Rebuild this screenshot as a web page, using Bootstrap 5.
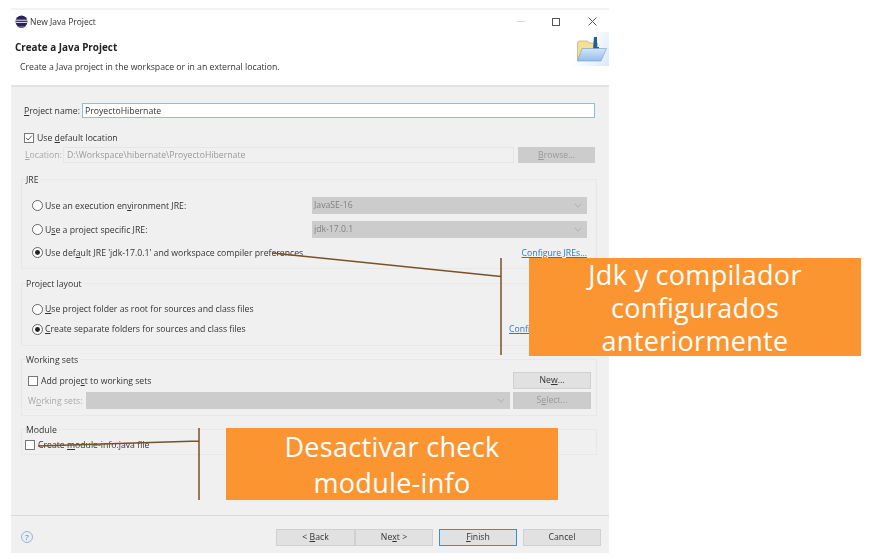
<!DOCTYPE html>
<html lang="en">
<head>
<meta charset="UTF-8">
<title>New Java Project</title>
<link href="https://cdn.jsdelivr.net/npm/bootstrap@5.3.0/dist/css/bootstrap.min.css" rel="stylesheet">
<style>
html, body { background: #fff; height: 100%; overflow: hidden; }
body { font-family: "Open Sans", "Liberation Sans", sans-serif; font-size: 8.7px; line-height: 12px; color: #333; position: relative; }
.dlg { width: 598px; margin: 8px 0 0 11px; height: 545px; background: #f0f0f0; filter: blur(.45px); }
.dlg-head { height: 77px; background: #fff; border-top: 2px solid #f3f3f3; }
.title-row { height: 23px; padding: 0 12px 0 4px; font-size: 8.5px; }
.title-icon { margin-right: 2px; }
.win-min { width: 8px; height: 1px; background: #d8d8d8; margin-right: 27px; }
.win-max { width: 8px; height: 8px; border: 1px solid #555; margin-right: 28px; }
.head-title { font-weight: 700; font-size: 9.9px; padding-left: 4px; margin-top: 8px; color: #222; }
.head-sub { padding-left: 9px; margin-top: 8px; }
.head-folder { width: 37px; height: 34px; background: linear-gradient(120deg, #fff 30%, #dce9f8); margin-top: -1px; }
.dlg-sep { height: 2px; background: #e2e2e2; }
.dlg-body { padding: 16px 12px 0 10px; height: 429px; border-bottom: 1px solid #d9d9d9; }
.field-row { height: 15px; margin-right: 2px; }
.name-label { width: 61px; padding-left: 3px; }
.name-input { flex: 1; min-width: 0; height: 15px; border: 1px solid #80c2ea; background: #fff; font-size: 8.7px; padding: 0 2px; color: #333; border-radius: 0; outline: 0; font-family: inherit; }
.use-default { height: 10px; margin: 15px 0 4px 3px; }
.form-check-input.tick { width: 10px; height: 10px; margin: 0 3px 0 0; border: 1px solid #777; border-radius: 0; background-color: #fff; flex: none; float: none; }
.form-check-input.tick:checked { background-color: #fff; border-color: #777; background-image: url("data:image/svg+xml,%3csvg xmlns='http://www.w3.org/2000/svg' viewBox='0 0 10 10'%3e%3cpath fill='none' stroke='%23333' d='M1.5 5l2.3 2.5L8.5 2'/%3e%3c/svg%3e"); }
.form-check-input.dot { width: 11px; height: 11px; margin: 0 2px 0 0; border: 1px solid #666; background-color: #fff; flex: none; float: none; }
.form-check-input.dot:checked { background-color: #fff; border-color: #666; background-image: url("data:image/svg+xml,%3csvg xmlns='http://www.w3.org/2000/svg' viewBox='0 0 11 11'%3e%3ccircle cx='5.5' cy='5.5' r='3' fill='%23222'/%3e%3c/svg%3e"); background-size: 100%; }
.loc-row { height: 16px; margin-right: 2px; }
.loc-label { width: 42px; padding-left: 4px; color: #a8a8a8; }
.loc-input { flex: 1; height: 16px; border: 1px solid #e6e6e6; color: #999; padding-left: 3px; line-height: 14px; }
.win-btn { width: 78px; height: 17px; background: #e1e1e1; border: 1px solid #d0d0d0; font-size: 8.7px; line-height: 15px; padding: 0; color: #333; border-radius: 0; font-family: inherit; text-align: center; }
.win-btn:disabled { background: #ccc; color: #999; border-color: #ccc; opacity: 1; }
.loc-btn { width: 77px; height: 16px; margin-left: 4px; line-height: 14px; }
.back-btn { width: 79px; }
.win-btn.main-btn { border: 1px solid #3b8fd0; margin: 0 6px; }
.win-select { height: 17px; min-height: 0; background-color: #ccc; border: 0; border-radius: 0; font-size: 8.7px; line-height: 17px; padding: 0 2px; color: #808080; background-image: url("data:image/svg+xml,%3csvg xmlns='http://www.w3.org/2000/svg' viewBox='0 0 10 6'%3e%3cpath fill='none' stroke='%23a8a8a8' d='M1 1l4 4 4-4'/%3e%3c/svg%3e"); background-size: 8px 5px; background-position: right 5px center; font-family: inherit; opacity: 1; }
.win-select:disabled { background-color: #ccc; color: #808080; }
.sel-jre { width: 275px; margin-right: 9px; }
.grp { border: 1px solid #e8e8e8; }
.grp-name { width: fit-content; margin: -6px 0 0 4px; padding-right: 2px; height: 12px; background: #f0f0f0; }
.grp-jre { height: 90px; margin-top: 16px; padding-left: 10px; }
.grp-jre .grp-name, .grp-layout .grp-name { margin-left: -6px; }
.jre-row { height: 17px; }
.jre-row.first { margin-top: 11px; }
.jre-row.second { margin-top: 7px; }
.jre-row.third { margin-top: 6px; }
.jre-link { margin-left: auto; margin-right: 9px; color: #1f7fc4; text-decoration: underline; }
.grp-layout { height: 63px; margin-top: 14px; padding-left: 10px; }
.layout-row { height: 20px; }
.layout-row.first { margin-top: 9px; }
.layout-link { margin-right: 10px; width: 77px; white-space: nowrap; }
.grp-sets { height: 57px; margin-top: 13px; padding: 0 5px 0 6px; }
.grp-sets .grp-name { margin-left: -2px; }
.sets-row { height: 17px; }
.sets-row.first { margin-top: 6px; }
.sets-row.second { margin-top: 3px; }
.sets-label { width: 58px; color: #a8a8a8; }
.sel-sets { flex: 1; width: auto; margin-right: 3px; }
.grp-module { height: 26px; margin-top: 13px; padding-left: 3px; }
.grp-module .grp-name { margin-left: 1px; }
.module-row { margin-top: 3px; }
.dlg-foot { height: 37px; padding: 13px 8px 0 10px; }
.help-mark { width: 12px; height: 12px; border: 1px solid #9fb4cc; border-radius: 50%; background: #e8eef6; color: #5a7aa0; font-size: 8px; line-height: 10px; text-align: center; margin-top: 2px; }
.overlay-lines { position: absolute; left: 0; top: 0; width: 873px; height: 559px; pointer-events: none; }
.callout { position: absolute; width: 332px; background: #fb9531; color: #fff; font-size: 27px; letter-spacing: .3px; text-align: center; font-family: "Open Sans", "Liberation Sans", sans-serif; }
.callout-jdk { left: 529px; top: 258px; height: 98px; line-height: 33px; }
.callout-mod { left: 226px; top: 428px; height: 72px; line-height: 36px; padding-top: 1px; }
u { text-underline-offset: 1px; }
</style>
</head>
<body>
<div class="dlg d-flex flex-column">
    <!--header-->
    <div class="dlg-head">
        <div class="title-row d-flex align-items-center">
            <svg width="13" height="13" viewBox="0 0 13 13" class="title-icon">
                <circle cx="6.5" cy="6.5" r="6" fill="#2c2255"/>
                <path d="M.7 5.2h11.6M.6 7.4h11.8" stroke="#fff" stroke-width=".9"/>
                <path d="M2 11a6 6 0 0 0 9 0" fill="#6a5aa0"/>
            </svg>
            <span>New Java Project</span>
            <span class="win-min ms-auto"></span>
            <span class="win-max"></span>
            <svg width="9" height="9" viewBox="0 0 9 9"><path d="M.5.5l8 8M8.5.5l-8 8" stroke="#555" fill="none"/></svg>
        </div>
        <div class="d-flex justify-content-between">
            <div>
                <div class="head-title">Create a Java Project</div>
                <div class="head-sub">Create a Java project in the workspace or in an external location.</div>
            </div>
            <div class="head-folder">
                <svg width="37" height="34" viewBox="0 0 37 34">
                    <defs>
                        <linearGradient id="glass" x1="0" y1="0" x2="0" y2="1">
                            <stop offset="0" stop-color="#d3e5f8"/>
                            <stop offset="1" stop-color="#94bdea"/>
                        </linearGradient>
                    </defs>
                    <path d="M5.500 28V11q0-2 2-2h8l2 2h8v6H11z" fill="#f5dd9a" stroke="#c4ab66" stroke-width=".7"/>
                    <path d="M22 5h3v10h2v2h-6z" fill="#1f5f96"/>
                    <path d="M5.500 29L10 16.500h24.500L29 29z" fill="url(#glass)" stroke="#7fa6d2" stroke-width=".7"/>
                </svg>
            </div>
        </div>
    </div>
    <div class="dlg-sep"></div>

    <!--body-->
    <div class="dlg-body">
        <div class="field-row d-flex align-items-center">
            <label class="name-label"><u>P</u>roject name:</label>
            <input class="name-input" value="ProyectoHibernate">
        </div>
        <div class="use-default d-flex align-items-center">
            <input type="checkbox" class="form-check-input tick" checked>
            <span>Use <u>d</u>efault location</span>
        </div>
        <div class="loc-row d-flex align-items-center">
            <span class="loc-label"><u>L</u>ocation:</span>
            <div class="loc-input">D:\Workspace\hibernate\ProyectoHibernate</div>
            <button class="win-btn loc-btn" disabled><u>B</u>rowse...</button>
        </div>

        <div class="grp grp-jre">
            <div class="grp-name">JRE</div>
            <div class="jre-row first d-flex align-items-center">
                <input type="radio" class="form-check-input dot">
                <span>Use an execution en<u>v</u>ironment JRE:</span>
                <select class="form-select win-select sel-jre ms-auto" disabled><option>JavaSE-16</option></select>
            </div>
            <div class="jre-row second d-flex align-items-center">
                <input type="radio" class="form-check-input dot">
                <span>U<u>s</u>e a project specific JRE:</span>
                <select class="form-select win-select sel-jre ms-auto" disabled><option>jdk-17.0.1</option></select>
            </div>
            <div class="jre-row third d-flex align-items-center">
                <input type="radio" class="form-check-input dot" checked>
                <span>Use def<u>a</u>ult JRE 'jdk-17.0.1' and workspace compiler preferences</span>
                <a class="jre-link" href="#">Configure JREs...</a>
            </div>
        </div>

        <div class="grp grp-layout">
            <div class="grp-name">Project layout</div>
            <div class="layout-row first d-flex align-items-center">
                <input type="radio" class="form-check-input dot">
                <span><u>U</u>se project folder as root for sources and class files</span>
            </div>
            <div class="layout-row d-flex align-items-center">
                <input type="radio" class="form-check-input dot" checked>
                <span><u>C</u>reate separate folders for sources and class files</span>
                <a class="jre-link layout-link" href="#">Configure default...</a>
            </div>
        </div>

        <div class="grp grp-sets">
            <div class="grp-name">Working sets</div>
            <div class="sets-row first d-flex align-items-center justify-content-between">
                <div class="d-flex align-items-center">
                    <input type="checkbox" class="form-check-input tick">
                    <span>Add proje<u>c</u>t to working sets</span>
                </div>
                <button class="win-btn">Ne<u>w</u>...</button>
            </div>
            <div class="sets-row second d-flex align-items-center">
                <span class="sets-label">W<u>o</u>rking sets:</span>
                <select class="form-select win-select sel-sets" disabled></select>
                <button class="win-btn" disabled>S<u>e</u>lect...</button>
            </div>
        </div>

        <div class="grp grp-module">
            <div class="grp-name">Module</div>
            <div class="module-row d-flex align-items-center">
                <input type="checkbox" class="form-check-input tick">
                <span>Create <u>m</u>odule-info.java file</span>
            </div>
        </div>
    </div>

    <!--footer-->
    <div class="dlg-foot d-flex">
        <div class="help-mark">?</div>
        <div class="d-flex ms-auto">
            <button class="win-btn back-btn">&lt; <u>B</u>ack</button>
            <button class="win-btn">Ne<u>x</u>t &gt;</button>
            <button class="win-btn main-btn"><u>F</u>inish</button>
            <button class="win-btn">Cancel</button>
        </div>
    </div>
</div>

<!--annotations over the dialog-->
<svg class="overlay-lines" viewBox="0 0 873 559">
    <g stroke="#7a5126" stroke-width="1.5" fill="none">
        <path d="M272 253L501 276.500M501 258V355"/>
        <path d="M38 446L199 441M199 428V500"/>
    </g>
</svg>
<div class="callout callout-jdk">Jdk y compilador<br>configurados<br>anteriormente</div>
<div class="callout callout-mod">Desactivar check<br>module-info</div>

<script src="https://cdn.jsdelivr.net/npm/bootstrap@5.3.0/dist/js/bootstrap.bundle.min.js"></script>
</body>
</html>
